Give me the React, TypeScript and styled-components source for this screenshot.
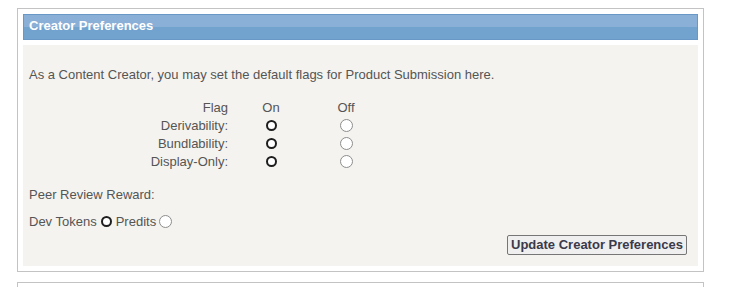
import React from "react";
import styled, { createGlobalStyle } from "styled-components";

const GlobalStyle = createGlobalStyle`
  body {
    margin: 0;
    background: #fff;
    font-family: "Liberation Sans", Arial, sans-serif;
    font-size: 13px;
    color: #555;
  }
`;

const Page = styled.div`
  padding: 8px 0 0 17px;
  display: flex;
  flex-direction: column;
  gap: 10px;
`;

const Panel = styled.div`
  width: 675px;
  border: 1px solid #c3c3c3;
  padding: 5px;
  display: flex;
  flex-direction: column;
  gap: 5px;
  background: #fff;
`;

const PanelHeader = styled.div`
  height: 24px;
  border: 1px solid #6a98c6;
  background: linear-gradient(#8bb0d7 0, #8bb0d7 12px, #72a3ce 12px, #72a3ce 100%);
  color: #fff;
  font-weight: bold;
  font-size: 13px;
  line-height: 22px;
  padding-left: 5px;
`;

const PanelBody = styled.div`
  background: #f4f3ef;
  padding: 22px 11px 11px 6px;
  display: flex;
  flex-direction: column;
  line-height: 15px;
`;

const Intro = styled.p`
  margin: 0 0 16px;
`;

const FlagGrid = styled.div`
  display: grid;
  grid-template-columns: 199px 86px 64px;
  grid-auto-rows: 18px;
  align-items: center;
`;

const Cell = styled.div<{ $align?: "right" | "center" }>`
  display: flex;
  justify-content: ${(p) => (p.$align === "right" ? "flex-end" : "center")};
  align-items: center;
`;

const Radio = styled.span<{ $on?: boolean }>`
  display: inline-block;
  box-sizing: border-box;
  width: ${(p) => (p.$on ? "11px" : "13px")};
  height: ${(p) => (p.$on ? "11px" : "13px")};
  margin: ${(p) => (p.$on ? "1px 3px" : "0 2px")};
  border-radius: 50%;
  border: ${(p) => (p.$on ? "2px solid #1e1e1e" : "1px solid #8d8d8d")};
  background: #fff;
`;

const Label = styled.div`
  margin-top: 17px;
`;

const RewardRow = styled.div`
  margin-top: 12px;
  display: flex;
  align-items: center;
  gap: 1px;
`;

const Actions = styled.div`
  margin-top: 6px;
  display: flex;
  justify-content: flex-end;
`;

const SubmitButton = styled.button`
  font-family: "Liberation Sans", Arial, sans-serif;
  font-weight: bold;
  font-size: 13px;
  color: #3a3a4a;
  background: #efefef;
  border: 1px solid #767676;
  border-radius: 2px;
  height: 20px;
  padding: 0 3px;
  line-height: 16px;
`;

const NextPanel = styled.div`
  width: 685px;
  height: 4px;
  border: 1px solid #c3c3c3;
  border-bottom: none;
`;

const flags = ["Derivability:", "Bundlability:", "Display-Only:"];

export default function App() {
  return (
    <>
      <GlobalStyle />
      <Page>
        <Panel>
          <PanelHeader>Creator Preferences</PanelHeader>
          <PanelBody>
            <Intro>As a Content Creator, you may set the default flags for Product Submission here.</Intro>
            <FlagGrid>
              <Cell $align="right">Flag</Cell>
              <Cell>On</Cell>
              <Cell>Off</Cell>
              {flags.map((f) => (
                <React.Fragment key={f}>
                  <Cell $align="right">{f}</Cell>
                  <Cell>
                    <Radio $on />
                  </Cell>
                  <Cell>
                    <Radio />
                  </Cell>
                </React.Fragment>
              ))}
            </FlagGrid>
            <Label>Peer Review Reward:</Label>
            <RewardRow>
              Dev Tokens <Radio $on /> Predits <Radio />
            </RewardRow>
            <Actions>
              <SubmitButton>Update Creator Preferences</SubmitButton>
            </Actions>
          </PanelBody>
        </Panel>
        <NextPanel />
      </Page>
    </>
  );
}
